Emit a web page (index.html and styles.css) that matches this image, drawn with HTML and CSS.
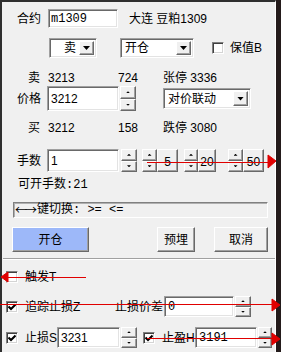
FILE: index.html
```html
<!DOCTYPE html>
<html lang="zh">
<head>
    <meta charset="UTF-8">
    <title>下单</title>
    <link rel="stylesheet" href="styles.css">
</head>
<body>
    <div class="win">
        <div class="row r1">
            <span class="lbl">合约</span>
            <div class="edit code"><span class="mono">m1309</span></div>
            <span class="name">大连 豆粕1309</span>
        </div>

        <div class="row r2">
            <div class="combo side"><span class="val right">卖</span><span class="btn drop"><i class="tri"></i></span></div>
            <div class="combo open"><span class="val">开仓</span><span class="btn drop"><i class="tri"></i></span></div>
            <span class="check hedge"></span>
            <span class="cap">保值B</span>
        </div>

        <div class="row quote r3">
            <span class="q1">卖</span><span class="q2">3213</span><span class="q3">724</span><span>张停 3336</span>
        </div>

        <div class="row r4">
            <span class="lbl">价格</span>
            <div class="edit num">3212</div>
            <div class="spin"><i class="btn"><b class="up"></b></i><i class="btn"><b class="dn"></b></i></div>
            <div class="combo mode"><span class="val">对价联动</span><span class="btn drop"><i class="tri"></i></span></div>
        </div>

        <div class="row quote r5">
            <span class="q1">买</span><span class="q2">3212</span><span class="q3">158</span><span>跌停 3080</span>
        </div>

        <div class="row r6">
            <span class="lbl">手数</span>
            <div class="edit num">1</div>
            <div class="spin s1"><i class="btn"><b class="up"></b></i><i class="btn"><b class="dn"></b></i></div>
            <div class="spin s5"><i class="btn"><b class="up"></b></i><i class="btn"><b class="dn"></b></i></div>
            <span class="btn qty b5">5</span>
            <div class="spin s20"><i class="btn"><b class="up"></b></i><i class="btn"><b class="dn"></b></i></div>
            <span class="btn qty b20">20</span>
            <div class="spin s50"><i class="btn"><b class="up"></b></i><i class="btn"><b class="dn"></b></i></div>
            <span class="btn qty b50">50</span>
        </div>

        <div class="row r7 song">可开手数:21</div>

        <div class="row hint song"><span class="arrows">←→</span>键切换: &gt;= &lt;=</div>

        <div class="row actions">
            <span class="btn act go">开仓</span>
            <span class="btn act park">预埋</span>
            <span class="btn act cancel">取消</span>
        </div>

        <div class="sep"></div>

        <div class="row r10">
            <span class="check"></span>
            <span class="cap">触发T</span>
        </div>

        <div class="row r11">
            <span class="check on"><svg width="8" height="8" viewBox="0 0 8 8"><path d="M0.5 3.5 L3 6 L7.5 1.5" fill="none" stroke="#000" stroke-width="2"/></svg></span>
            <span class="cap trail">追踪止损Z</span>
            <span class="gap-lbl">止损价差</span>
            <div class="edit diff"><span class="mono">0</span></div>
            <div class="spin"><i class="btn"><b class="up"></b></i><i class="btn"><b class="dn"></b></i></div>
        </div>

        <div class="row r12">
            <span class="check on"><svg width="8" height="8" viewBox="0 0 8 8"><path d="M0.5 3.5 L3 6 L7.5 1.5" fill="none" stroke="#000" stroke-width="2"/></svg></span>
            <span class="cap stop">止损S</span>
            <div class="edit sl">3231</div>
            <div class="spin"><i class="btn"><b class="up"></b></i><i class="btn"><b class="dn"></b></i></div>
            <span class="check on tp"><svg width="8" height="8" viewBox="0 0 8 8"><path d="M0.5 3.5 L3 6 L7.5 1.5" fill="none" stroke="#000" stroke-width="2"/></svg></span>
            <span class="cap take">止盈H</span>
            <div class="edit tpv"><span class="mono">3191</span></div>
            <div class="spin narrow"><i class="btn"><b class="up"></b></i><i class="btn"><b class="dn"></b></i></div>
        </div>
    </div>

    <!-- red annotation arrows drawn over the dialog -->
    <svg class="marks" width="281" height="352" viewBox="0 0 281 352">
        <g stroke="#e00000" stroke-width="1" fill="#e00000" stroke-linejoin="round">
            <line x1="147" y1="162.5" x2="269" y2="162.5"/>
            <path d="M268 155 L276 161 L268 168 Z"/>
            <line x1="8" y1="277.5" x2="86" y2="277.5"/>
            <path d="M1 277 L8 272 L8 282 Z"/>
            <line x1="0" y1="304.5" x2="272" y2="304.5"/>
            <path d="M272 299 L280 305 L272 311 Z"/>
            <line x1="147" y1="338.5" x2="272" y2="338.5"/>
            <path d="M272 333 L280 339 L272 345 Z"/>
        </g>
    </svg>
</body>
</html>
```

FILE: styles.css
```css
* {
    box-sizing: border-box;
}
body {
    margin: 0;
    background: #241b1b;
    font: 12px/14px "Liberation Sans", "Noto Sans CJK SC", sans-serif;
    color: #000;
}
.win {
    width: 276px;
    height: 352px;
    background: #f0f0f0;
    border-left: 2px solid #2f2f2f;
    border-top: 2px solid #2f2f2f;
    border-right: 1px solid #fff;
}
.row {
    display: flex;
    align-items: center;
}
.mono, .song {
    font-family: "Liberation Mono", "Noto Sans CJK SC", monospace;
}
.lbl {
    width: 30px;
    flex: none;
}

/* sunken edit box */
.edit {
    height: 100%;
    background: #fff;
    border: 1px solid;
    border-color: #a0a0a0 #fff #fff #a0a0a0;
    box-shadow: inset 1px 1px 0 #696969, inset -1px -1px 0 #e3e3e3;
    padding: 0 3px;
    display: flex;
    align-items: center;
    flex: none;
}

/* raised button */
.btn {
    background: #f0f0f0;
    border: 1px solid;
    border-color: #fff #696969 #696969 #fff;
    box-shadow: inset -1px -1px 0 #a0a0a0;
    display: flex;
    align-items: center;
    justify-content: center;
    flex: none;
}

.combo {
    height: 100%;
    display: flex;
    background: #fff;
    border: 1px solid;
    border-color: #a0a0a0 #fff #fff #a0a0a0;
    box-shadow: inset 1px 1px 0 #696969, inset -1px -1px 0 #e3e3e3;
    padding: 2px;
    flex: none;
}
.combo .val {
    flex: 1;
    padding: 0 2px;
    display: flex;
    align-items: center;
}
.combo .val.right {
    justify-content: flex-end;
    padding-right: 3px;
}
.drop {
    width: 15px;
}
.tri {
    width: 7px;
    height: 4px;
    background: #000;
    clip-path: polygon(0 0, 100% 0, 50% 100%);
}

.spin {
    width: 16px;
    height: 100%;
    display: flex;
    flex-direction: column;
    margin-left: 1px;
    flex: none;
}
.spin i {
    flex: 1;
}
.spin b {
    width: 4px;
    height: 2px;
    background: #000;
}
.spin b.up {
    clip-path: polygon(50% 0, 100% 100%, 0 100%);
}
.spin b.dn {
    clip-path: polygon(0 0, 100% 0, 50% 100%);
}

.check {
    width: 12px;
    height: 12px;
    background: #fff;
    border: 1px solid;
    border-color: #808080 #fff #fff #808080;
    box-shadow: inset 1px 1px 0 #404040, inset -1px -1px 0 #d4d4d4;
    display: flex;
    align-items: center;
    justify-content: center;
    flex: none;
}

/* row 1 */
.r1 {
    height: 19px;
    margin-top: 7px;
    padding-left: 15px;
}
.r1 .lbl {
    width: 31px;
}
.code {
    width: 70px;
    padding-left: 2px;
}
.name {
    margin-left: 11px;
}

/* row 2 */
.r2 {
    height: 20px;
    margin-top: 10px;
    padding-left: 47px;
}
.side {
    width: 48px;
}
.open {
    width: 74px;
    margin-left: 23px;
}
.hedge {
    margin-left: 18px;
}
.r2 .cap {
    margin-left: 6px;
}

/* quote rows */
.quote {
    height: 14px;
    padding-left: 26px;
}
.q1 {
    width: 20px;
}
.q2 {
    width: 70px;
}
.q3 {
    width: 45px;
}
.r3 {
    margin-top: 13px;
}
.r5 {
    margin-top: 10px;
}

/* price row */
.r4 {
    height: 25px;
    margin-top: 1px;
    padding-left: 15px;
}
.num {
    width: 72px;
}
.mode {
    width: 88px;
    height: 21px;
    margin-left: 27px;
}

/* quantity row */
.r6 {
    height: 23px;
    margin-top: 14px;
    padding-left: 15px;
}
.s1 {
    margin-left: 2px;
}
.s5 {
    width: 15px;
    margin-left: 5px;
}
.s20 {
    width: 14px;
    margin-left: 6px;
}
.s50 {
    width: 15px;
    margin-left: 12px;
}
.qty {
    height: 100%;
    padding-top: 2px;
}
.b5, .b50 {
    width: 21px;
}
.b20 {
    width: 18px;
}

.r7 {
    height: 14px;
    margin-top: 6px;
    padding-left: 16px;
}

.hint {
    width: 255px;
    height: 16px;
    margin: 10px 0 0 11px;
    border: 1px solid;
    border-color: #808080 #fff #fff #808080;
    box-shadow: inset 1px 1px 0 #b0b0b0;
    padding-left: 1px;
}
.arrows {
    font-family: "Noto Sans CJK SC", sans-serif;
    letter-spacing: -2px;
    margin-right: 2px;
}

/* buttons */
.actions {
    height: 25px;
    margin-top: 9px;
    padding-left: 10px;
}
.act {
    height: 100%;
}
.go {
    width: 77px;
    background: #9db8f9;
}
.park {
    width: 38px;
    margin-left: 68px;
}
.cancel {
    width: 54px;
    margin-left: 19px;
}

.sep {
    height: 2px;
    margin: 6px 0 0 1px;
    border-top: 1px solid #a0a0a0;
    border-bottom: 1px solid #fff;
}

/* conditional orders */
.r10 {
    height: 13px;
    margin-top: 10px;
    padding-left: 4px;
}
.r10 .cap {
    margin-left: 7px;
}
.r11 {
    height: 21px;
    margin-top: 13px;
    padding-left: 4px;
}
.trail {
    width: 90px;
    margin-left: 7px;
}
.gap-lbl {
    width: 49px;
}
.diff {
    width: 70px;
}
.r12 {
    height: 21px;
    margin-top: 10px;
    padding-left: 4px;
}
.stop {
    width: 32px;
    margin-left: 7px;
}
.sl {
    width: 63px;
}
.tp {
    margin-left: 6px;
}
.take {
    width: 33px;
    margin-left: 7px;
}
.tpv {
    width: 62px;
}
.narrow {
    width: 14px;
}

.marks {
    position: absolute;
    top: 0;
    left: 0;
    pointer-events: none;
}
```
